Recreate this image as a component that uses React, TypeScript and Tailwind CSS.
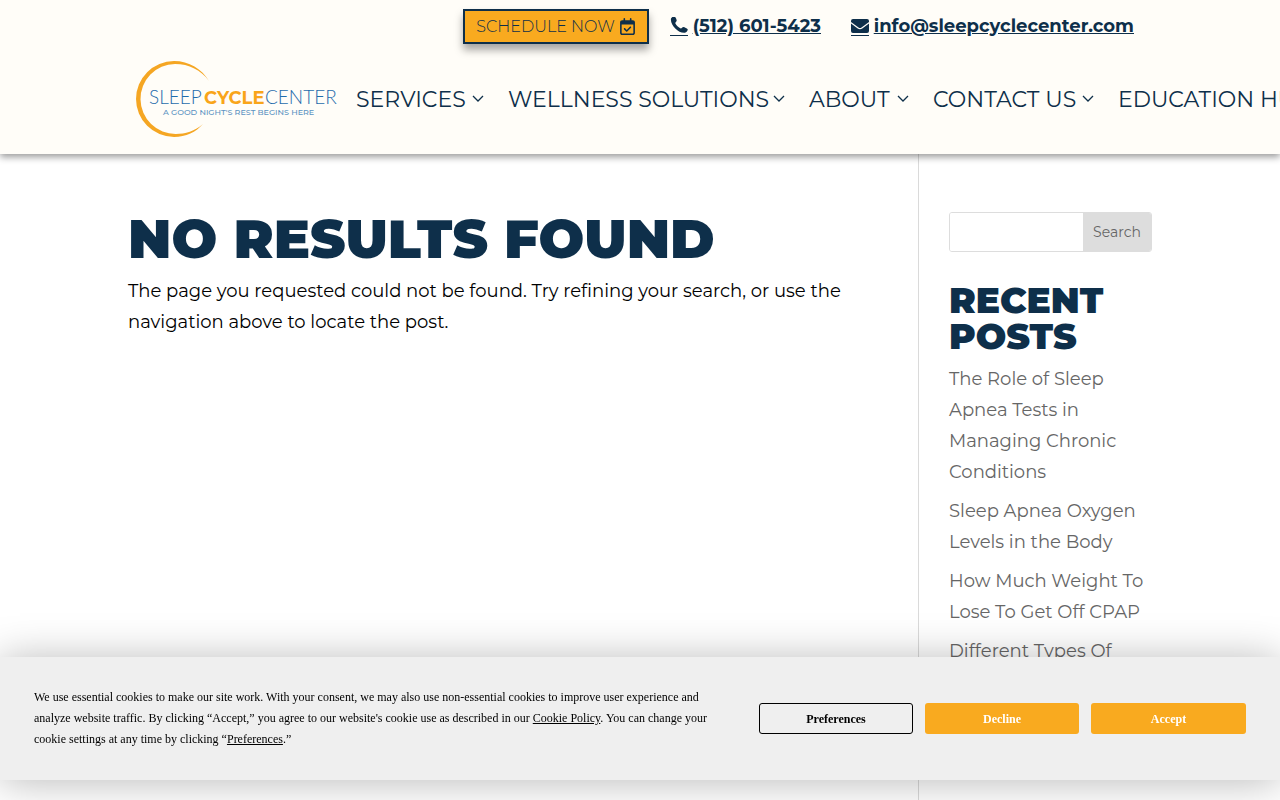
import { FaRegCalendarCheck } from 'react-icons/fa6';

const navItems = [
  { label: 'SERVICES', width: 'w-[128px]' },
  { label: 'WELLNESS SOLUTIONS', width: 'w-[277px]' },
  { label: 'ABOUT', width: 'w-[100px]' },
  { label: 'CONTACT US', width: 'w-[161px]' },
  { label: 'EDUCATION HUB', width: 'w-[220px]' },
];

const recentPosts = [
  'The Role of Sleep Apnea Tests in Managing Chronic Conditions',
  'Sleep Apnea Oxygen Levels in the Body',
  'How Much Weight To Lose To Get Off CPAP',
  'Different Types Of',
];

const Logo = () => (
  <svg viewBox="0 0 200 78" className="h-[78px] w-[200px] overflow-visible" role="img" aria-label="Sleep Cycle Center">
    <path
      d="M73 21 C66 9 53 1 38 1 A38 38 0 0 0 38 77 C50 77 60 72 67 64 C59 71 49 74 40 74 A35 35 0 0 1 39 4 C53 4 65 10 73 21 Z"
      fill="#f5a623"
    />
    <g fontFamily="Lato, sans-serif" fontSize="19" fontWeight="300" fill="#1f6cac">
      <text x="13" y="44">SLEEP</text>
      <text x="129" y="44">CENTER</text>
    </g>
    <g fontFamily="Montserrat, sans-serif">
      <text x="68" y="44" fontSize="18" fontWeight="700" fill="#f9a51a">CYCLE</text>
      <text x="27" y="55" fontSize="8" fontWeight="500" fill="#5c93c2">A GOOD NIGHT'S REST BEGINS HERE</text>
    </g>
  </svg>
);

const Chevron = () => (
  <svg viewBox="0 0 12 8" className="h-2 w-3 shrink-0" fill="none" stroke="currentColor" strokeWidth="1.3">
    <path d="M1 1 L6 6 L11 1" />
  </svg>
);

const PhoneIcon = () => (
  <svg viewBox="0 0 18 18" className="size-[18px]" fill="currentColor">
    <path d="M1 1.600 C1.800 0 3.500 -1 4.600 -.7 C5.700 .4 6.600 2.300 6.700 3.800 C6.600 4.700 5.100 5.300 5.300 6.200 C6.100 8.200 8.500 10.600 10.800 11.400 C11.700 11.500 12.300 9.900 13.300 9.900 C14.900 10.200 16.800 11.200 17.700 12.200 C17.900 13.700 16.600 15.300 14.900 15.800 C8.700 16.700 -.1 7.600 1 1.600 Z" />
  </svg>
);

const MailIcon = () => (
  <svg viewBox="0 0 18 18" className="size-[18px]" fill="currentColor">
    <path d="M2 2 H16 Q18 2 18 4 V5 L10.500 10.500 Q9 11.500 7.500 10.500 L0 5 V4 Q0 2 2 2 Z" />
    <path d="M0 6.600 L6.700 11.600 Q9 13.100 11.300 11.600 L18 6.600 V14 Q18 16 16 16 H2 Q0 16 0 14 Z" />
  </svg>
);

const Header = () => (
  <header className="relative z-10 h-[154px] overflow-x-clip bg-[#fffdf8] shadow-[0_3px_7px_rgba(0,0,0,0.4)]">
    <div className="mx-auto w-4/5">
      <div className="flex items-start justify-end pt-[9px] pr-[18px] text-[18px] font-bold">
        <button
          type="button"
          className="mr-[21px] flex h-[35px] w-[186px] items-center justify-center gap-1 border-2 border-[#0e2f4a] bg-[#f9aa1f] text-[16px] font-light whitespace-nowrap shadow-[0_6px_8px_rgba(0,0,0,0.35)]"
        >
          SCHEDULE NOW
          <FaRegCalendarCheck className="size-[17px]" />
        </button>
        <a href="tel:5126015423" className="mr-[30px] flex h-[35px] w-[151px] items-center justify-between underline">
          <span className="border-b border-current"><PhoneIcon /></span>
          (512) 601-5423
        </a>
        <a href="mailto:info@sleepcyclecenter.com" className="flex h-[35px] w-[283px] items-center justify-between underline">
          <span className="border-b border-current"><MailIcon /></span>
          info@sleepcyclecenter.com
        </a>
      </div>
    </div>
    <div className="ml-[10%] flex items-center pt-4 pl-2">
      <a href="#" className="mr-5 shrink-0"><Logo /></a>
      <nav>
        <ul className="flex gap-6 text-[22px] font-normal whitespace-nowrap">
          {navItems.map((item) => (
            <li key={item.label} className={item.width}>
              <a href="#" className="flex items-center justify-between">
                {item.label}
                <Chevron />
              </a>
            </li>
          ))}
        </ul>
      </nav>
    </div>
  </header>
);

const Sidebar = () => (
  <aside className="w-[234px] shrink-0 border-l border-[#dadada] pt-[58px] pl-[30px]">
    <form className="flex h-10 overflow-hidden rounded-[3px] border border-[#dddddd]">
      <input type="text" aria-label="Search for" className="min-w-0 flex-1 bg-white px-2 text-sm outline-none" />
      <button type="button" className="w-[68px] bg-[#dddddd] text-[14px] text-[#666666]">Search</button>
    </form>
    <h2 className="mt-[30px] text-[36px] leading-9 font-black">RECENT POSTS</h2>
    <ul className="mt-[10px] flex flex-col gap-2 text-[18px] leading-[31px] text-[#666666]">
      {recentPosts.map((post) => (
        <li key={post}><a href="#">{post}</a></li>
      ))}
    </ul>
  </aside>
);

const CookieBanner = () => (
  <section
    aria-label="Cookie consent"
    className="fixed inset-x-0 bottom-5 z-20 flex h-[123px] items-center justify-between bg-[#efefef] px-[34px] font-['Liberation_Serif',serif] text-[12px] text-black shadow-[0_2px_40px_rgba(0,0,0,0.28)]"
  >
    <p className="w-[680px] leading-[21px]">
      We use essential cookies to make our site work. With your consent, we may also use non-essential cookies to
      improve user experience and analyze website traffic. By clicking “Accept,” you agree to our website's cookie use
      as described in our <a href="#" className="underline">Cookie Policy</a>. You can change your cookie settings at
      any time by clicking “<a href="#" className="underline">Preferences</a>.”
    </p>
    <div className="flex gap-3 font-bold">
      <button type="button" className="h-[31px] w-[154px] rounded-[3px] border border-black">Preferences</button>
      <button type="button" className="h-[31px] w-[154px] rounded-[3px] bg-[#f9aa1f] text-white">Decline</button>
      <button type="button" className="h-[31px] w-[155px] rounded-[3px] bg-[#f9aa1f] text-white">Accept</button>
    </div>
  </section>
);

const App = () => {
  return (
    <div className="flex min-h-screen flex-col bg-white font-['Montserrat',sans-serif] text-[#0e2f4a]">
      <Header />
      <div className="mx-auto flex w-4/5 flex-1">
        <main className="min-w-0 flex-1 pt-[58px] pr-[60px]">
          <h1 className="text-[54px] leading-[54px] font-black">NO RESULTS FOUND</h1>
          <p className="mt-[10px] text-[18px] leading-[31px] text-black">
            The page you requested could not be found. Try refining your search, or use the navigation above to locate
            the post.
          </p>
        </main>
        <Sidebar />
      </div>
      <CookieBanner />
    </div>
  );
};

export default App;
